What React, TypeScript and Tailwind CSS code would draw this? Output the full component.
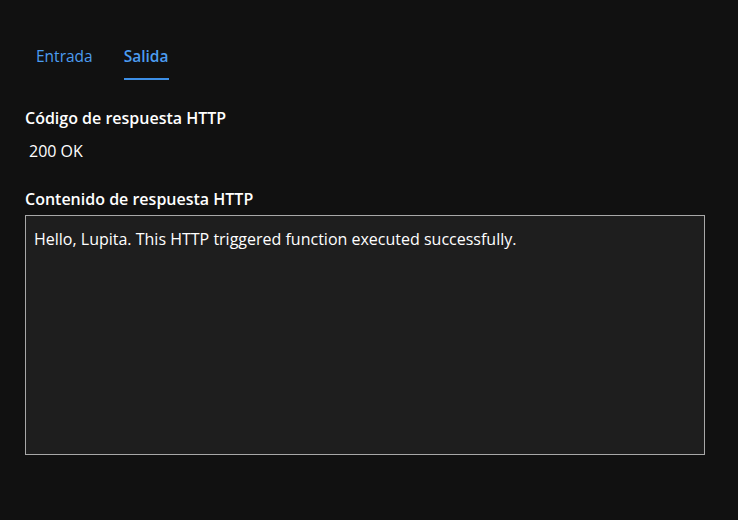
import React from 'react';

export default function App() {
  const tabs = ['Entrada', 'Salida'];
  const active = 'Salida';

  return (
    <div
      className="w-[738px] h-[520px] bg-[#111111] text-white overflow-hidden"
      style={{ fontFamily: '"Open Sans", "Noto Sans", sans-serif' }}
    >
      <div className="flex gap-[31px] pl-[36px] pt-[43px]">
        {tabs.map((t) => (
          <div
            key={t}
            className={`pb-[9px] border-b-2 text-[15.5px] leading-[26px] text-[#4c9cf0] ${
              t === active ? 'border-[#3d8fe6] font-semibold' : 'border-transparent'
            }`}
          >
            {t}
          </div>
        ))}
      </div>

      <div className="px-[25px] pt-[27px]">
        <div className="text-[16px] font-semibold leading-[22px]">Código de respuesta HTTP</div>
        <div className="mt-[11px] pl-[4px] text-[16px] leading-[22px]">200 OK</div>

        <div className="mt-[26px] text-[16px] font-semibold leading-[22px]">Contenido de respuesta HTTP</div>
        <div className="mt-[5px] w-[680px] h-[240px] border border-[#a8a8a8] bg-[#1e1e1e] px-[8px] pt-[12px] text-[16px] leading-[22px]">
          Hello, Lupita. This HTTP triggered function executed successfully.
        </div>
      </div>
    </div>
  );
}
